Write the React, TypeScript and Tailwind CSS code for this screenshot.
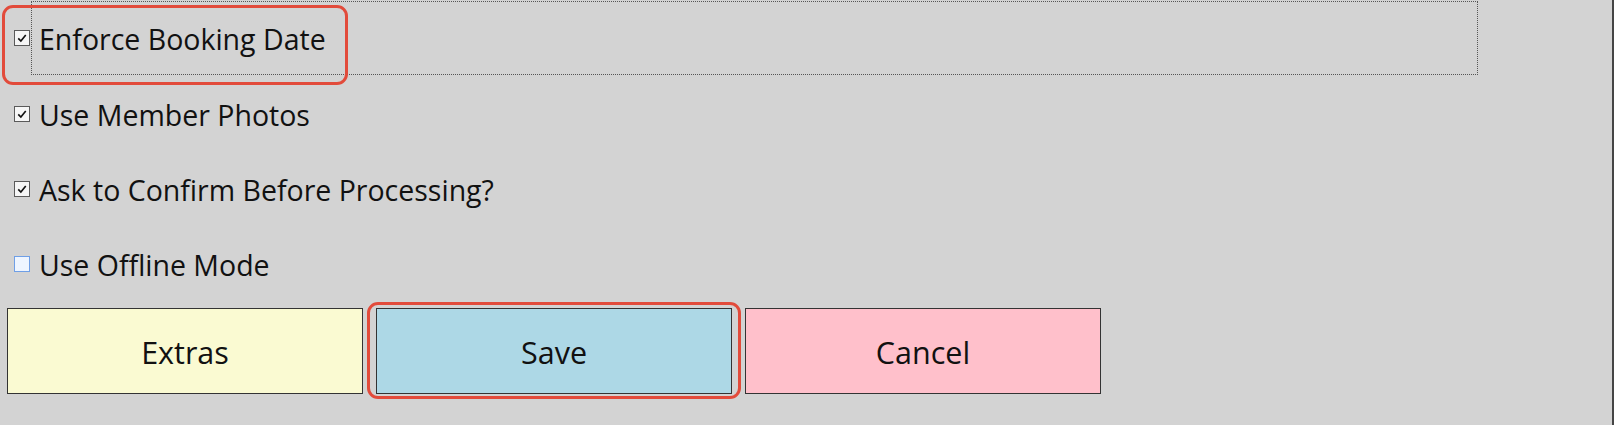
import { useState } from "react";

const font = { fontFamily: '"Open Sans", "Noto Sans", sans-serif' };

function CheckBox({ checked }: { checked: boolean }) {
	return checked ? (
		<span className="flex h-[16px] w-[16px] shrink-0 items-center justify-center border border-[#5a5a5a] bg-[#f6f6f6]">
			<svg viewBox="0 0 16 16" className="h-[12px] w-[12px]">
				<path d="M3 8.5 L6.5 12 L13 4" fill="none" stroke="#111" strokeWidth="2.2" />
			</svg>
		</span>
	) : (
		<span className="h-[16px] w-[16px] shrink-0 border border-[#6f9fe6] bg-[#eef5ff]" />
	);
}

export default function App() {
	const [options] = useState([
		{ label: "Enforce Booking Date", checked: true, focused: true },
		{ label: "Use Member Photos", checked: true, focused: false },
		{ label: "Ask to Confirm Before Processing?", checked: true, focused: false },
		{ label: "Use Offline Mode", checked: false, focused: false },
	]);

	return (
		<div className="flex h-[425px] w-full bg-[#d3d3d3] text-[#111]" style={font}>
			<div className="relative flex flex-1 flex-col">
				{options.map((opt, i) => (
					<div key={opt.label} className={`flex items-center pl-[14px] ${i === 0 ? "h-[76px]" : "h-[75px]"}`}>
						<CheckBox checked={opt.checked} />
						<span
							className={`ml-[1px] flex h-[74px] items-center pl-[7px] pt-[3px] text-[28.5px] ${
								opt.focused ? "w-[1447px] border border-dotted border-[#555]" : "border border-transparent"
							}`}
						>
							{opt.label}
						</span>
					</div>
				))}

				{/* annotation around the focused option */}
				<div className="pointer-events-none absolute left-[2px] top-[5px] h-[80px] w-[346px] rounded-[11px] border-[3px] border-[#e24b3b]" />

				<div className="flex gap-[13px] pl-[7px] pt-[7px]">
					<button className="flex h-[86px] w-[356px] items-center justify-center border border-[#333] bg-[#fafad2] pt-[3px] text-[30.5px]">
						Extras
					</button>
					<div className="relative">
						<button className="flex h-[86px] w-[356px] items-center justify-center border border-[#333] bg-[#add8e6] pt-[3px] text-[30.5px]">
							Save
						</button>
						<div className="pointer-events-none absolute -bottom-[5px] -left-[9px] -right-[9px] -top-[6px] rounded-[11px] border-[3px] border-[#e24b3b]" />
					</div>
					<button className="flex h-[86px] w-[356px] items-center justify-center border border-[#333] bg-[#ffc0cb] pt-[3px] text-[30.5px]">
						Cancel
					</button>
				</div>
			</div>
			<div className="w-[2px] bg-[#454545]" />
		</div>
	);
}
